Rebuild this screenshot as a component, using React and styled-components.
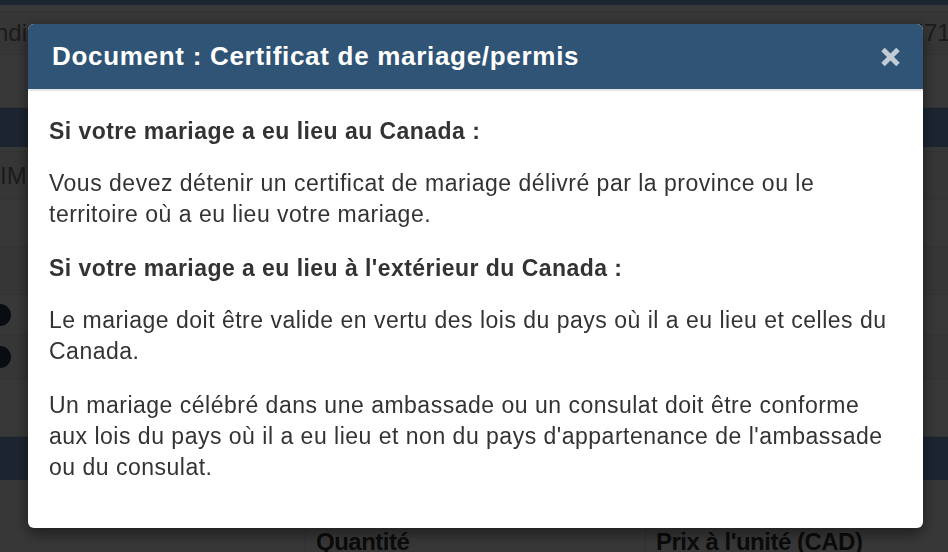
import styled, { createGlobalStyle } from "styled-components";

const GlobalStyle = createGlobalStyle`
body {
  margin: 0;
  background: #ffffff;
  font-family: "Liberation Sans", Arial, sans-serif;
  overflow: hidden;
}
`;

// page behind the dialog
const Page = styled.div`
  display: flex;
  flex-direction: column;
  height: 552px;
  overflow: hidden;
`;

const TopBar = styled.div`
  height: 5px;
  background: #7fa8da;
  flex: none;
`;

const Row = styled.div`
  display: flex;
  align-items: center;
  justify-content: space-between;
  flex: none;
  height: ${(p) => p.$h}px;
  background: ${(p) => (p.$alt ? "#f4f4f4" : "#ffffff")};
  border-bottom: 1px solid #e6e6e6;
  box-sizing: border-box;
  overflow: hidden;
  font-size: 24px;
  color: #7c7c7c;
  white-space: nowrap;
`;

const Band = styled.div`
  height: ${(p) => p.$h}px;
  background: #7ea6d8;
  flex: none;
`;

const Lead0 = styled.span`
  margin-left: -5px;
`;

const Tail = styled.span`
  margin-right: -16px;
`;

const HelpDot = styled.span`
  width: 22px;
  height: 22px;
  margin-left: -11px;
  border-radius: 50%;
  background: #2a3a4a;
`;

const TableHead = styled.div`
  display: grid;
  grid-template-columns: 305px 340px 1fr;
  flex: 1;
  background: #fafafa;
  font-size: 24px;
  font-weight: bold;
  color: #333;
  letter-spacing: -0.5px;
`;

const HeadCell = styled.div`
  border-left: ${(p) => (p.$first ? "none" : "1px solid #dddddd")};
  padding: 48px 10px 0;
`;

// overlay + dialog
const Backdrop = styled.div`
  position: fixed;
  inset: 0;
  background: rgba(0, 0, 0, 0.78);
`;

const Dialog = styled.div`
  position: fixed;
  top: 24px;
  left: 28px;
  width: 895px;
  background: #ffffff;
  border-radius: 6px;
  box-shadow: 0 5px 15px rgba(0, 0, 0, 0.5);
  overflow: hidden;
`;

const Header = styled.div`
  display: flex;
  align-items: center;
  justify-content: space-between;
  height: 65px;
  padding: 0 22px 0 24px;
  background: #2f5475;
  border-bottom: 2px solid #e5e5e5;
`;

const Title = styled.h4`
  margin: 0;
  font-size: 26px;
  letter-spacing: 0.7px;
  font-weight: bold;
  color: #ffffff;
`;

const CloseButton = styled.button`
  display: flex;
  padding: 0;
  border: 0;
  background: none;
  cursor: pointer;
`;

const Body = styled.div`
  padding: 25px 25px 22px 21px;
  color: #333333;
  font-size: 23px;
  line-height: 31px;
  letter-spacing: 0.5px;
`;

const Lead = styled.p`
  margin: 0 0 21px;
  font-weight: bold;
  letter-spacing: 0.45px;
`;

const Text = styled.p`
  margin: 0 0 23px;
`;

const CloseIcon = () => (
  <svg width="21" height="20" viewBox="0 0 21 20">
    <g stroke="#c1ccd6" strokeWidth="5">
      <line x1="3" y1="2.5" x2="18" y2="17.5" />
      <line x1="18" y1="2.5" x2="3" y2="17.5" />
    </g>
  </svg>
);

const App = () => {
  return (
    <>
      <GlobalStyle />
      <Page>
        <TopBar />
        <Row $h={7} />
        <Row $h={43} $alt>
          <Lead0>nditions</Lead0>
          <Tail>IMM5710</Tail>
        </Row>
        <Row $h={53} />
        <Band $h={39} />
        <Row $h={5} />
        <Row $h={48} $alt>
          <span>IMM</span>
        </Row>
        <Row $h={47} />
        <Row $h={48} $alt />
        <Row $h={40}>
          <HelpDot />
        </Row>
        <Row $h={45} $alt>
          <HelpDot />
        </Row>
        <Row $h={57} />
        <Band $h={43} />
        <TableHead>
          <HeadCell $first />
          <HeadCell>Quantité</HeadCell>
          <HeadCell>Prix à l'unité (CAD)</HeadCell>
        </TableHead>
      </Page>

      <Backdrop />
      <Dialog role="dialog">
        <Header>
          <Title>Document : Certificat de mariage/permis</Title>
          <CloseButton aria-label="Fermer">
            <CloseIcon />
          </CloseButton>
        </Header>
        <Body>
          <Lead>Si votre mariage a eu lieu au Canada :</Lead>
          <Text>
            Vous devez détenir un certificat de mariage délivré par la province ou le
            territoire où a eu lieu votre mariage.
          </Text>
          <Lead>Si votre mariage a eu lieu à l'extérieur du Canada :</Lead>
          <Text>
            Le mariage doit être valide en vertu des lois du pays où il a eu lieu et celles du
            Canada.
          </Text>
          <Text>
            Un mariage célébré dans une ambassade ou un consulat doit être conforme
            aux lois du pays où il a eu lieu et non du pays d'appartenance de l'ambassade
            ou du consulat.
          </Text>
        </Body>
      </Dialog>
    </>
  );
};

export default App;
